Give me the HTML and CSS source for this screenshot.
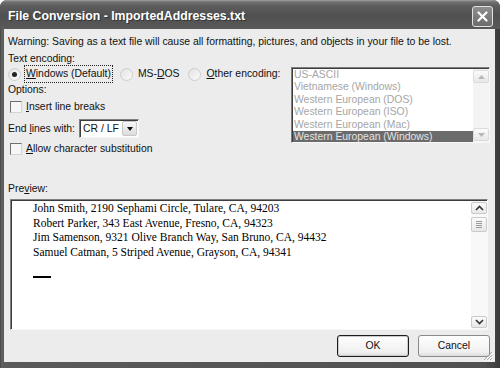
FILE: index.html
```html
<!DOCTYPE html>
<html lang="en">
<head>
  <meta charset="UTF-8">
  <title>File Conversion</title>
  <link rel="stylesheet" href="styles.css">
</head>
<body>
<div class="window">
  <div class="titlebar">
    <span class="title">File Conversion - ImportedAddresses.txt</span>
    <span class="close">
      <svg width="11" height="11" viewBox="0 0 11 11"><path d="M1.5 1.5 L9.5 9.5 M9.5 1.5 L1.5 9.5" stroke="#fff" stroke-width="2.2" stroke-linecap="round"/></svg>
    </span>
  </div>

  <div class="client">
    <div class="line">Warning: Saving as a text file will cause all formatting, pictures, and objects in your file to be lost.</div>

    <div class="encoding">
      <div class="settings">
        <div class="line short">Text encoding:</div>
        <div class="radios">
          <label class="radio"><span class="knob checked"></span><span class="caption focused"><u>W</u>indows (Default)</span></label>
          <label class="radio"><span class="knob"></span><span class="caption">MS-<u>D</u>OS</span></label>
          <label class="radio"><span class="knob"></span><span class="caption"><u>O</u>ther encoding:</span></label>
        </div>
        <div class="line">Options:</div>
        <label class="check"><span class="box"></span><span><u>I</u>nsert line breaks</span></label>
        <div class="endlines">
          <span>End <u>l</u>ines with:</span>
          <span class="select"><span class="value">CR / LF</span><span class="drop"><i></i></span></span>
        </div>
        <label class="check allow"><span class="box"></span><span><u>A</u>llow character substitution</span></label>
      </div>

      <div class="listbox sunken">
        <ul class="items">
          <li>US-ASCII</li>
          <li>Vietnamese (Windows)</li>
          <li>Western European (DOS)</li>
          <li>Western European (ISO)</li>
          <li>Western European (Mac)</li>
          <li class="sel">Western European (Windows)</li>
        </ul>
        <div class="scroll">
          <span class="sbtn off"><svg width="7" height="4" viewBox="0 0 7 4"><path d="M0 4 L3.5 0 L7 4 Z" fill="#b8b8b8"/></svg></span>
          <span class="sbtn off"><svg width="7" height="4" viewBox="0 0 7 4"><path d="M0 0 L3.5 4 L7 0 Z" fill="#b8b8b8"/></svg></span>
        </div>
      </div>
    </div>

    <div class="line preview-label">Pre<u>v</u>iew:</div>
    <div class="preview sunken">
      <div class="doc">
        <p>John Smith, 2190 Sephami Circle, Tulare, CA, 94203</p>
        <p>Robert Parker, 343 East Avenue, Fresno, CA, 94323</p>
        <p>Jim Samenson, 9321 Olive Branch Way, San Bruno, CA, 94432</p>
        <p>Samuel Catman, 5 Striped Avenue, Grayson, CA, 94341</p>
        <span class="cursor"></span>
      </div>
      <div class="scroll">
        <span class="sbtn"><svg width="9" height="6" viewBox="0 0 9 6"><path d="M1 5 L4.5 1.5 L8 5" fill="none" stroke="#333" stroke-width="1.6"/></svg></span>
        <span class="sbtn thumb"><svg width="6" height="7" viewBox="0 0 6 7"><path d="M0 .5 H6 M0 2.5 H6 M0 4.5 H6 M0 6.5 H6" stroke="#9a9a9a" stroke-width="1"/></svg></span>
        <span class="sbtn down"><svg width="9" height="6" viewBox="0 0 9 6"><path d="M1 1 L4.5 4.5 L8 1" fill="none" stroke="#333" stroke-width="1.6"/></svg></span>
      </div>
    </div>

    <div class="buttons">
      <button class="btn default">OK</button>
      <button class="btn">Cancel</button>
    </div>

    <svg class="grip" width="10" height="10" viewBox="0 0 10 10">
      <path d="M9 1 L1 9 M9 4 L4 9 M9 7 L7 9" stroke="#a8a8a8" stroke-width="1"/>
      <path d="M10 2 L2 10 M10 5 L5 10 M10 8 L8 10" stroke="#fff" stroke-width="1"/>
    </svg>
  </div>
</div>
</body>
</html>
```

FILE: styles.css
```css
* {
  box-sizing: border-box;
}

body {
  margin: 0;
  background: #fff;
  font: 10.4px/14px "Liberation Sans", Arial, sans-serif;
  color: #111;
}

u {
  text-decoration-thickness: 1px;
}

.window {
  width: 500px;
  height: 368px;
  display: flex;
  flex-direction: column;
  background: linear-gradient(90deg, #474747, #626262 2px, #5a5a5a 4px, #505050 97%, #3a3a3a);
  border-radius: 7px 7px 0 0;
  overflow: hidden;
}

.titlebar {
  height: 29px;
  flex: none;
  display: flex;
  align-items: center;
  justify-content: space-between;
  padding: 3px 7px 0 8px;
  background: linear-gradient(#a0a0a0, #707070 2px, #5c5c5c 6px, #505050 55%, #595959);
}

.title {
  color: #fff;
  font: bold 12.3px "Liberation Sans", Arial, sans-serif;
  text-shadow: 1px 1px 0 #333;
}

.close {
  width: 21px;
  height: 21px;
  display: flex;
  align-items: center;
  justify-content: center;
  border: 1px solid #e2e2e2;
  border-radius: 3px;
  background: linear-gradient(#8e8e8e, #6c6c6c);
}

/* dialog body */
.client {
  flex: 1;
  position: relative;
  display: flex;
  flex-direction: column;
  margin: 0 5px 6px 4px;
  padding: 6px 5px 0 4px;
  background: #ececec;
}

.line {
  height: 14px;
  white-space: nowrap;
}

.short {
  height: 13px;
}

.encoding {
  display: flex;
  justify-content: space-between;
  margin-top: 3px;
}

.settings {
  display: flex;
  flex-direction: column;
}

.radios {
  display: flex;
  align-items: center;
  height: 18px;
  gap: 7px;
}

.radio {
  display: flex;
  align-items: center;
}

.knob {
  width: 13px;
  height: 13px;
  margin-right: 3px;
  display: flex;
  align-items: center;
  justify-content: center;
  border: 1px solid #cdcdcd;
  border-radius: 50%;
  background: linear-gradient(135deg, #e2e2e2, #fbfbfb);
}

.knob.checked::after {
  content: "";
  width: 5px;
  height: 5px;
  border-radius: 50%;
  background: #222;
}

.caption {
  padding: 0 1px;
  line-height: 16px;
  border: 1px dotted transparent;
}

.focused {
  border-color: #222;
}

.check {
  display: flex;
  align-items: center;
  height: 14px;
  margin-top: 3px;
  white-space: nowrap;
}

.allow {
  margin-top: 4px;
}

.box {
  width: 12px;
  height: 12px;
  margin: 0 4px 0 2px;
  border: 1px solid;
  border-color: #707070 #d4d4d4 #d4d4d4 #707070;
  background: #f6f6f6;
}

.endlines {
  display: flex;
  align-items: center;
  height: 19px;
  margin-top: 5px;
  white-space: nowrap;
}

.select {
  width: 60px;
  height: 19px;
  margin-left: 4px;
  display: flex;
  align-items: stretch;
  padding: 1px 1px 1px 3px;
  background: #fff;
  border: 1px solid;
  border-color: #7f7f7f #f4f4f4 #f4f4f4 #7f7f7f;
  box-shadow: inset 1px 1px 0 #3c3c3c;
}

.value {
  flex: 1;
  line-height: 15px;
}

.drop {
  width: 15px;
  display: flex;
  align-items: center;
  justify-content: center;
  border: 1px solid #c6c6c6;
  border-radius: 2px;
  background: linear-gradient(#f8f8f8, #dcdcdc);
}

.drop i {
  border-left: 3.5px solid transparent;
  border-right: 3.5px solid transparent;
  border-top: 4px solid #111;
}

.sunken {
  border: 1px solid;
  border-color: #7f7f7f #f8f8f8 #f8f8f8 #7f7f7f;
  box-shadow: inset 1px 1px 0 #3c3c3c;
  background: #fff;
  padding: 1px 0 0 1px;
}

.listbox {
  width: 199px;
  height: 76px;
  margin-top: 15px;
  display: flex;
}

.items {
  flex: 1;
  margin: 0;
  padding: 0;
  list-style: none;
  overflow: hidden;
  color: #a6a6a6;
}

.items li {
  height: 12.4px;
  line-height: 12.4px;
  padding-left: 1px;
  white-space: nowrap;
}

.items .sel {
  background: #6b6b6b;
  color: #e4e4e4;
}

.scroll {
  width: 16px;
  display: flex;
  flex-direction: column;
  justify-content: space-between;
  padding: 1px 0;
  background: #f4f4f4;
}

.sbtn {
  height: 13px;
  display: flex;
  align-items: center;
  justify-content: center;
  border: 1px solid #cacaca;
  border-radius: 2px;
  background: linear-gradient(#fbfbfb, #e8e8e8);
}

.sbtn.off {
  border-color: #dcdcdc;
}

.preview-label {
  margin-top: 26px;
}

.preview {
  height: 131px;
  margin: 3px 2px 0;
  display: flex;
}

.doc {
  flex: 1;
  padding-left: 21px;
  font: 11.5px/14.5px "Liberation Serif", "Times New Roman", serif;
  color: #000;
}

.doc p {
  margin: 0;
  white-space: nowrap;
}

.cursor {
  display: block;
  width: 18px;
  height: 2px;
  margin-top: 17px;
  background: #000;
}

.preview .scroll {
  justify-content: flex-start;
  background: #f8f8f8;
}

.preview .sbtn {
  height: 12px;
}

.preview .thumb {
  height: 15px;
  margin-top: 3px;
}

.preview .down {
  margin-top: auto;
}

.buttons {
  display: flex;
  justify-content: flex-end;
  gap: 9px;
  margin-top: 5px;
}

.btn {
  width: 72px;
  height: 22px;
  padding: 0;
  font: inherit;
  color: #111;
  border: 1px solid #8a8a8a;
  border-radius: 3px;
  background: linear-gradient(#fefefe, #f0f0f0 80%, #dcdcdc);
}

.default {
  border-color: #1c1c1c;
  box-shadow: inset 0 0 0 1px #cacaca;
}

.grip {
  position: absolute;
  right: 2px;
  bottom: 1px;
}
```
